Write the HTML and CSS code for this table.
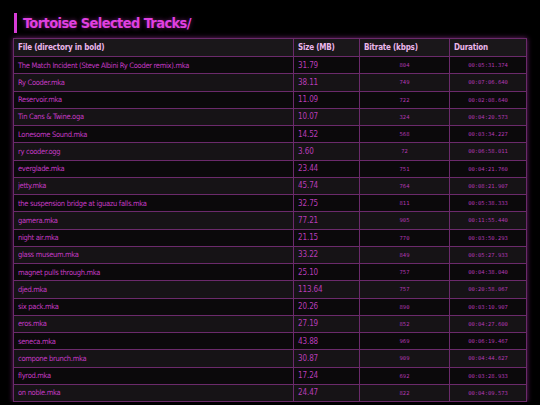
FILE: index.html
```html
<!DOCTYPE html>
<html>
<head>
  <title>Tortoise Selected Tracks</title>
  <link rel="stylesheet" href="styles.css">
</head>
<body>
  <h1 class="title">Tortoise Selected Tracks/</h1>
  <table class="tracks">
    <thead>
      <tr>
        <th class="col-file">File (directory in bold)</th>
        <th class="col-size">Size (MB)</th>
        <th class="col-rate">Bitrate (kbps)</th>
        <th class="col-dur">Duration</th>
      </tr>
    </thead>
    <tbody>
      <tr><td>The Match Incident (Steve Albini Ry Cooder remix).mka</td><td class="size">31.79</td><td class="mono">804</td><td class="mono">00:05:31.374</td></tr>
      <tr><td>Ry Cooder.mka</td><td class="size">38.11</td><td class="mono">749</td><td class="mono">00:07:06.640</td></tr>
      <tr><td>Reservoir.mka</td><td class="size">11.09</td><td class="mono">722</td><td class="mono">00:02:08.640</td></tr>
      <tr><td>Tin Cans &amp; Twine.oga</td><td class="size">10.07</td><td class="mono">324</td><td class="mono">00:04:20.573</td></tr>
      <tr><td>Lonesome Sound.mka</td><td class="size">14.52</td><td class="mono">568</td><td class="mono">00:03:34.227</td></tr>
      <tr><td>ry cooder.ogg</td><td class="size">3.60</td><td class="mono">72</td><td class="mono">00:06:58.011</td></tr>
      <tr><td>everglade.mka</td><td class="size">23.44</td><td class="mono">751</td><td class="mono">00:04:21.760</td></tr>
      <tr><td>jetty.mka</td><td class="size">45.74</td><td class="mono">764</td><td class="mono">00:08:21.907</td></tr>
      <tr><td>the suspension bridge at iguazu falls.mka</td><td class="size">32.75</td><td class="mono">811</td><td class="mono">00:05:38.333</td></tr>
      <tr><td>gamera.mka</td><td class="size">77.21</td><td class="mono">905</td><td class="mono">00:11:55.440</td></tr>
      <tr><td>night air.mka</td><td class="size">21.15</td><td class="mono">770</td><td class="mono">00:03:50.293</td></tr>
      <tr><td>glass museum.mka</td><td class="size">33.22</td><td class="mono">849</td><td class="mono">00:05:27.933</td></tr>
      <tr><td>magnet pulls through.mka</td><td class="size">25.10</td><td class="mono">757</td><td class="mono">00:04:38.040</td></tr>
      <tr><td>djed.mka</td><td class="size">113.64</td><td class="mono">757</td><td class="mono">00:20:58.067</td></tr>
      <tr><td>six pack.mka</td><td class="size">20.26</td><td class="mono">890</td><td class="mono">00:03:10.907</td></tr>
      <tr><td>eros.mka</td><td class="size">27.19</td><td class="mono">852</td><td class="mono">00:04:27.600</td></tr>
      <tr><td>seneca.mka</td><td class="size">43.88</td><td class="mono">969</td><td class="mono">00:06:19.467</td></tr>
      <tr><td>compone brunch.mka</td><td class="size">30.87</td><td class="mono">909</td><td class="mono">00:04:44.627</td></tr>
      <tr><td>flyrod.mka</td><td class="size">17.24</td><td class="mono">692</td><td class="mono">00:03:28.933</td></tr>
      <tr><td>on noble.mka</td><td class="size">24.47</td><td class="mono">822</td><td class="mono">00:04:09.573</td></tr>
    </tbody>
  </table>
</body>
</html>
```

FILE: styles.css
```css
body {
  background-color: #000;
  margin: 0;
  padding: 13px 13px 0 13px;
  font-family: "DejaVu Sans Condensed", "Liberation Sans", sans-serif;
  color: #c43ac4;
}

.title {
  margin: 0 0 5px 1px;
  padding-left: 6px;
  border-left: 3px solid #d63cd6;
  color: #e040e0;
  font-size: 14.5px;
  line-height: 20px;
  letter-spacing: -0.6px;
  font-weight: bold;
  text-shadow: 0 0 4px rgba(221, 63, 221, 0.5);
}

.tracks {
  width: 514px;
  border-collapse: collapse;
  table-layout: fixed;
  box-shadow: 0 0 5px rgba(200, 60, 200, 0.55);
}

.tracks th,
.tracks td {
  border: 1px solid #6b2a6b;
  padding: 0 4px;
  height: 16.26px;
  white-space: nowrap;
  overflow: hidden;
}

.tracks th {
  height: 17px;
  background-color: #1a171a;
  color: #eab6ea;
  font-size: 8px;
  letter-spacing: -0.2px;
  font-weight: bold;
  text-align: left;
}

.col-file { width: 271px; }
.col-size { width: 57px; }
.col-rate { width: 81px; }

.tracks td {
  font-size: 7.5px;
  letter-spacing: -0.3px;
  color: #c43ac4;
}

.tracks tbody tr:nth-child(odd) td {
  background-color: #0b090b;
}

.tracks tbody tr:nth-child(even) td {
  background-color: #161316;
}

.tracks td.size {
  font-size: 8px;
  letter-spacing: -0.1px;
  color: #b83cb8;
}

.tracks td.mono {
  font-family: "DejaVu Sans Mono", "Liberation Mono", monospace;
  font-size: 5.5px;
  letter-spacing: 0;
  text-align: center;
  color: #b238b2;
}
```
